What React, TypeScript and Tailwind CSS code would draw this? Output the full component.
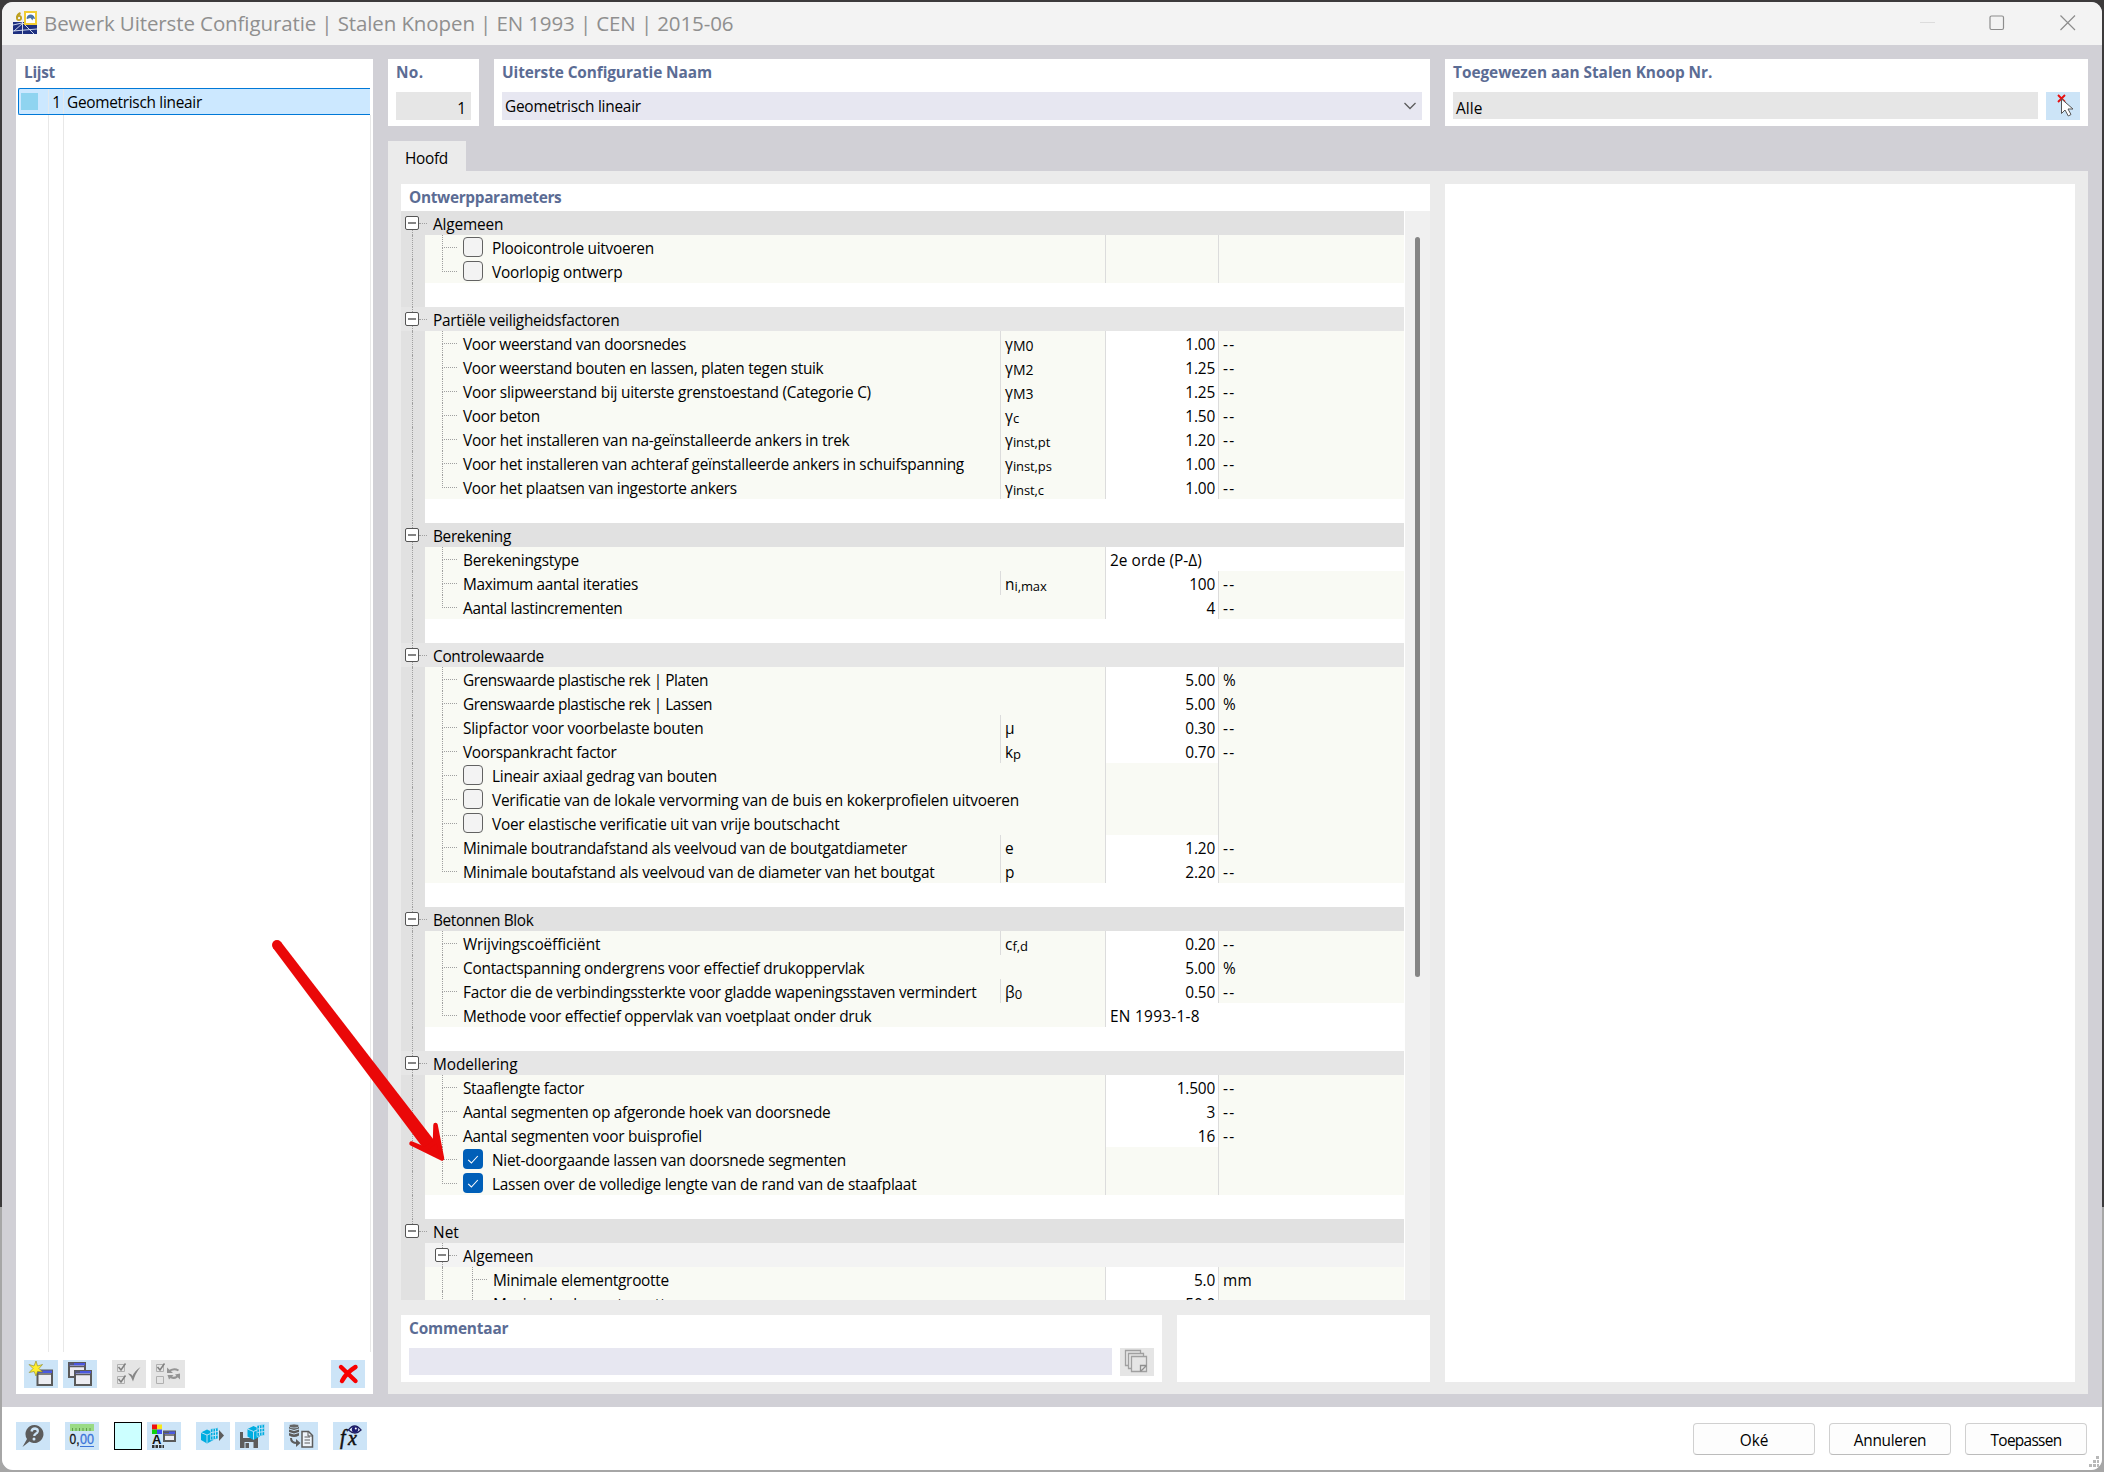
import React, { useLayoutEffect, useRef } from "react";

/* Text run whose tracking is computed so that it fills the given width. */
function Fit({ w, children, className = "" }: { w?: number; children: string; className?: string }) {
  const ref = useRef<HTMLSpanElement>(null);
  useLayoutEffect(() => {
    const el = ref.current;
    if (!el || !w) return;
    el.style.letterSpacing = "0px";
    const natural = el.getBoundingClientRect().width;
    el.style.letterSpacing = `${(w + 0.9 - natural) / children.length}px`;
  }, [w, children]);
  return (
    <span ref={ref} className={"whitespace-pre " + className}>
      {children}
    </span>
  );
}

type Item = {
  t: string;
  w: number;
  sym?: [string, string];
  v?: string;
  u?: string;
  text?: string;
  check?: boolean;
};
type Group = { t: string; w: number; dark: boolean; items: Item[] };

const groups: Group[] = [
  {
    t: "Algemeen", w: 69.5, dark: true,
    items: [
      { t: "Plooicontrole uitvoeren", w: 161, check: false },
      { t: "Voorlopig ontwerp", w: 129.5, check: false },
    ],
  },
  {
    t: "Partiële veiligheidsfactoren", w: 185.5, dark: false,
    items: [
      { t: "Voor weerstand van doorsnedes", w: 222, sym: ["γ", "M0"], v: "1.00", u: "--" },
      { t: "Voor weerstand bouten en lassen, platen tegen stuik", w: 359.5, sym: ["γ", "M2"], v: "1.25", u: "--" },
      { t: "Voor slipweerstand bij uiterste grenstoestand (Categorie C)", w: 407, sym: ["γ", "M3"], v: "1.25", u: "--" },
      { t: "Voor beton", w: 76, sym: ["γ", "c"], v: "1.50", u: "--" },
      { t: "Voor het installeren van na-geïnstalleerde ankers in trek", w: 385.5, sym: ["γ", "inst,pt"], v: "1.20", u: "--" },
      { t: "Voor het installeren van achteraf geïnstalleerde ankers in schuifspanning", w: 500, sym: ["γ", "inst,ps"], v: "1.00", u: "--" },
      { t: "Voor het plaatsen van ingestorte ankers", w: 273, sym: ["γ", "inst,c"], v: "1.00", u: "--" },
    ],
  },
  {
    t: "Berekening", w: 77, dark: true,
    items: [
      { t: "Berekeningstype", w: 115, text: "2e orde (P-Δ)" },
      { t: "Maximum aantal iteraties", w: 174, sym: ["n", "i,max"], v: "100", u: "--" },
      { t: "Aantal lastincrementen", w: 158.5, v: "4", u: "--" },
    ],
  },
  {
    t: "Controlewaarde", w: 110, dark: false,
    items: [
      { t: "Grenswaarde plastische rek | Platen", w: 244, v: "5.00", u: "%" },
      { t: "Grenswaarde plastische rek | Lassen", w: 248, v: "5.00", u: "%" },
      { t: "Slipfactor voor voorbelaste bouten", w: 239.5, sym: ["μ", ""], v: "0.30", u: "--" },
      { t: "Voorspankracht factor", w: 152.5, sym: ["k", "p"], v: "0.70", u: "--" },
      { t: "Lineair axiaal gedrag van bouten", w: 224, check: false },
      { t: "Verificatie van de lokale vervorming van de buis en kokerprofielen uitvoeren", w: 526, check: false },
      { t: "Voer elastische verificatie uit van vrije boutschacht", w: 346.5, check: false },
      { t: "Minimale boutrandafstand als veelvoud van de boutgatdiameter", w: 443, sym: ["e", ""], v: "1.20", u: "--" },
      { t: "Minimale boutafstand als veelvoud van de diameter van het boutgat", w: 470.5, sym: ["p", ""], v: "2.20", u: "--" },
    ],
  },
  {
    t: "Betonnen Blok", w: 99.5, dark: true,
    items: [
      { t: "Wrijvingscoëfficiënt", w: 136.5, sym: ["c", "f,d"], v: "0.20", u: "--" },
      { t: "Contactspanning ondergrens voor effectief drukoppervlak", w: 400.5, v: "5.00", u: "%" },
      { t: "Factor die de verbindingssterkte voor gladde wapeningsstaven vermindert", w: 512.5, sym: ["β", "0"], v: "0.50", u: "--" },
      { t: "Methode voor effectief oppervlak van voetplaat onder druk", w: 407.5, text: "EN 1993-1-8" },
    ],
  },
  {
    t: "Modellering", w: 83.5, dark: false,
    items: [
      { t: "Staaflengte factor", w: 120, v: "1.500", u: "--" },
      { t: "Aantal segmenten op afgeronde hoek van doorsnede", w: 366.5, v: "3", u: "--" },
      { t: "Aantal segmenten voor buisprofiel", w: 238, v: "16", u: "--" },
      { t: "Niet-doorgaande lassen van doorsnede segmenten", w: 353, check: true },
      { t: "Lassen over de volledige lengte van de rand van de staafplaat", w: 423.5, check: true },
    ],
  },
];

const netItems: Item[] = [
  { t: "Minimale elementgrootte", w: 175, v: "5.0", u: "mm" },
  { t: "Maximale elementgrootte", w: 180, v: "50.0", u: "mm" },
];

function Toggle({ above, below }: { above: boolean; below: boolean }) {
  return (
    <div className="flex h-6 w-[14px] shrink-0 flex-col">
      <div className={"ml-[7px] h-[5px] " + (above ? "border-l border-dotted border-[#a0a0a0]" : "")} />
      <div className="flex h-[14px] items-center justify-center rounded-[2px] border border-[#555] bg-white">
        <div className="h-[2px] w-2 bg-[#858585]" />
      </div>
      <div className={"ml-[7px] h-[5px] " + (below ? "border-l border-dotted border-[#a0a0a0]" : "")} />
    </div>
  );
}

function Branch({ last }: { last: boolean }) {
  return (
    <div className="h-6 w-[21px] shrink-0">
      <div className="h-[13px] w-[15px] border-b border-l border-dotted border-[#a0a0a0]" />
      {!last && <div className="h-[11px] border-l border-dotted border-[#a0a0a0]" />}
    </div>
  );
}

function Gutter({ line }: { line: boolean }) {
  return (
    <div className="h-6 w-6 shrink-0 bg-[#e1e1e1] pl-[11px]">
      {line && <div className="h-6 border-l border-dotted border-[#a0a0a0]" />}
    </div>
  );
}

function HeaderRow({ t, w, dark, first, last }: { t: string; w: number; dark: boolean; first: boolean; last: boolean }) {
  return (
    <div className={"flex h-6 shrink-0 pl-1 leading-[28px] " + (dark ? "bg-[#e1e1e1]" : "bg-[#e6e6e6]")}>
      <Toggle above={!first} below={!last} />
      <div className="mr-[6px] h-[13px] w-2 border-b border-dotted border-[#a0a0a0]" />
      <Fit w={w}>{t}</Fit>
    </div>
  );
}

function Check({ on }: { on: boolean }) {
  return on ? (
    <div className="mt-[2px] mr-[9px] h-5 w-5 shrink-0 rounded-[4px] bg-[#005fb8]">
      <svg width="20" height="20" viewBox="0 0 20 20" fill="none" stroke="#fff" strokeWidth="1.1">
        <path d="M5.2 10.800l3.200 3.200 6.400-7" />
      </svg>
    </div>
  ) : (
    <div className="mt-[2px] mr-[9px] h-5 w-5 shrink-0 rounded-[4px] border border-[#626262] bg-[#f3f3f3]" />
  );
}

function ItemRow({ item, last, deep }: { item: Item; last: boolean; deep?: boolean }) {
  const editable = item.v !== undefined;
  return (
    <div className="flex h-6 shrink-0 leading-[28px]">
      <Gutter line={!deep} />
      <div className={"flex h-6 shrink-0 bg-[#f9faf4] pl-[17px] " + (item.sym ? "w-[575px]" : "w-[680px]")}>
        {deep && <div className="h-6 w-[30px] shrink-0 border-l border-dotted border-[#a0a0a0]" />}
        <Branch last={last} />
        {item.check !== undefined && <Check on={item.check} />}
        <Fit w={item.w}>{item.t}</Fit>
      </div>
      {item.sym && (
        <div className="h-6 w-[105px] shrink-0 border-l border-[#dcdcdc] bg-[#f9faf4] pl-1">
          <span>{item.sym[0]}</span>
          <span className={"relative top-px " + (item.sym[1].startsWith("M") ? "text-[14px]" : "text-[13px] tracking-[-0.1px]")}>{item.sym[1]}</span>
        </div>
      )}
      {item.text ? (
        <div className="h-6 grow border-l border-[#dcdcdc] bg-white pl-1">
          <Fit w={item.text.length > 11 ? 91 : 89}>{item.text}</Fit>
        </div>
      ) : (
        <>
          <div className={"h-6 w-[113px] shrink-0 border-l border-[#dcdcdc] pr-[3px] text-right tracking-[-0.2px] " + (editable ? "bg-white" : "bg-[#f9faf4]")}>
            {item.v}
          </div>
          <div className="h-6 grow border-l border-[#dcdcdc] bg-[#f9faf4] pl-1 tracking-[0.3px]">
            {item.u === "--" ? <Fit w={11.5}>--</Fit> : item.u}
          </div>
        </>
      )}
    </div>
  );
}

const Title = ({ w, children }: { w: number; children: string }) => (
  <div className="h-[33px] leading-[27px] font-bold text-[#5b6c94]">
    <Fit w={w}>{children}</Fit>
  </div>
);

function IconBox({ children, gray, ml = "" }: { children: React.ReactNode; gray?: boolean; ml?: string }) {
  return (
    <div className={"h-7 w-[34px] shrink-0 " + ml + (gray ? " bg-[#e5e5e5]" : " bg-[#cce4f7]")}>
      <svg width="34" height="28" viewBox="0 0 34 28" fill="none">
        {children}
      </svg>
    </div>
  );
}

const WindowGlyph = ({ x, y, w = 16, h = 16 }: { x: number; y: number; w?: number; h?: number }) => (
  <g>
    <rect x={x} y={y} width={w} height={h} fill="#ececf2" stroke="#5a5a5a" strokeWidth="2" />
    <rect x={x} y={y} width={w} height="2.5" fill="#4a58e0" />
    <path d={`M${x} ${y + 1}h5M${x} ${y + 3.5}h${w}`} stroke="#5a5a5a" strokeWidth="1.4" />
  </g>
);

const Cube = () => (
  <g>
    <path d="M5 10.500l6-3 6.500 3v7.500l-6.500 3.500-6-3.500z" fill="#00ade0" />
    <path d="M5 10.500l6 2.500 6-2.500M11 13v8" stroke="#cce4f7" strokeWidth=".9" />
    <path d="M14.500 7l7.500-1.200v11l-7.500 1.200z" fill="#00ade0" stroke="#cce4f7" strokeWidth=".6" />
    <path d="M17 7v10M19.500 6.500v10M15 10.500l7-1M15 14l7-1" stroke="#cce4f7" strokeWidth=".9" />
  </g>
);

function PushButton({ w, children }: { w: number; children: string }) {
  return (
    <div className="flex h-8 w-[122px] items-center justify-center rounded-[4px] border border-[#d0d0d0] border-b-[#bcbcbc] bg-[#fdfdfd] pt-[4px]">
      <Fit w={w}>{children}</Fit>
    </div>
  );
}

function TitleBar() {
  return (
    <div className="flex h-[43px] shrink-0 items-center bg-[#f3f3f3] pl-[11px]">
      <svg className="mt-[-1px]" width="24" height="24" viewBox="0 0 24 24" fill="none">
        <rect y="11" width="24" height="12" fill="#1d2f80" />
        <path d="M0 20l24-2M9.500 8v15M10 12L1 20M10 12l11 11M0 14l9-2" stroke="#dfe6f4" strokeWidth=".9" />
        <path d="M7.500 2Q4 3.500 4 7" stroke="#bda021" strokeWidth="2" />
        <circle cx="6" cy="7" r="2.100" stroke="#bda021" strokeWidth="1.800" />
        <rect x="12" y="1" width="11" height="12" fill="#fff" stroke="#f1cc32" strokeWidth="2" />
        <path d="M13.500 7.500q.5-4 4.500-4 3.500.5 4 4.500l-2-.5-.5 2-2-2.500-2 .5-1 .5z" fill="#4b74a8" />
      </svg>
      <Fit w={688.5} className="ml-[7px] text-[20.5px] leading-[41px] -mt-[1px] text-[#8f8f8f]">
        Bewerk Uiterste Configuratie | Stalen Knopen | EN 1993 | CEN | 2015-06
      </Fit>
      <svg className="-mt-px mr-[25px] ml-auto" width="158" height="18" viewBox="0 0 158 18" fill="none">
        <path d="M1 8.500h15" stroke="#dcdcdc" />
        <rect x="71" y="2" width="13.500" height="13.500" rx="1.500" stroke="#8d8d8d" strokeWidth="1.200" />
        <path d="M141.500 1.500l14.500 14.500M156 1.500L141.500 16" stroke="#8d8d8d" strokeWidth="1.200" />
      </svg>
    </div>
  );
}

function ListPanel() {
  return (
    <div className="flex w-[357px] shrink-0 flex-col bg-white">
      <div className="h-[29px] pl-2 leading-[27px] font-bold text-[#5b6c94]">
        <Fit w={30}>Lijst</Fit>
      </div>
      <div className="ml-[2px] flex h-[27px] w-[352px] shrink-0 rounded-l-[2px] border border-r-0 border-[#0078d7] bg-[#cce8ff] leading-[27px]">
        <div className="flex w-[30px] shrink-0 border-r border-[#e4e9ed] pt-1 pl-[2px]">
          <div className="h-[17px] w-[17px] bg-[#8fd4f0]" />
        </div>
        <div className="w-[15px] shrink-0 border-r border-[#e4e9ed] pr-[2px] text-right">1</div>
        <div className="pl-[3px]">
          <Fit w={134}>Geometrisch lineair</Fit>
        </div>
      </div>
      <div className="flex h-[1237px] shrink-0">
        <div className="w-[33px] border-r border-[#e8e8e8]" />
        <div className="w-[15px] border-r border-[#e8e8e8]" />
        <div className="w-[307px] border-r border-[#e8e8e8]" />
      </div>
      <div className="mt-2 flex pr-2 pl-2">
        <IconBox>
          <WindowGlyph x={13.5} y={10.5} w={14.5} h={14.5} />
          <path d="M12 1l1.500 5 5-1.500-3.500 4 3.500 3.500-5-.5L12 16l-1.800-4.500-5 1L9 8.500 5 4.500l5 1.500z" fill="#ffee2e" stroke="#8d8420" strokeWidth=".6" />
        </IconBox>
        <IconBox ml="ml-[5px]">
          <WindowGlyph x={6} y={3} w={16} h={14} />
          <WindowGlyph x={12} y={11} w={16} h={14} />
        </IconBox>
        <IconBox gray ml="ml-[15px]">
          <path d="M5.500 4.500h7v7h-7zM5.500 16.500h7v7h-7z" stroke="#b0b0b0" />
          <path d="M6.500 7l2.500 3 4.500-6.500M6.500 19l2.500 3 4.500-6.500" stroke="#808080" strokeWidth="1.500" />
          <path d="M16 13.500q3.500-.5 4.500 2.500 2-5 8-9-5 6-7.500 14.500-1.500-5-5-8z" fill="#878787" />
        </IconBox>
        <IconBox gray ml="ml-[5px]">
          <path d="M5.500 4.500h7v7h-7zM5.500 16.500h7v7h-7z" stroke="#b0b0b0" />
          <path d="M6.500 7l2.500 3 4.500-6.500" stroke="#808080" strokeWidth="1.500" />
          <path d="M17.500 11.500q5-4 10-1M27.500 15q-3 4.500-8 2" stroke="#949494" strokeWidth="2" />
          <path d="M16 7.500v5.500h6zM29 19.500v-6l-5 1z" fill="#949494" />
          <path d="M16.500 15h6l-4.500 4.500z" fill="#949494" />
        </IconBox>
        <IconBox ml="ml-auto">
          <path d="M10 7l14.500 14M24.500 7q-9 5.500-13.500 14" stroke="#f80000" strokeWidth="4.400" strokeLinecap="round" />
        </IconBox>
      </div>
    </div>
  );
}

function TopPanels() {
  return (
    <div className="flex h-[67px] shrink-0">
      <div className="w-[91px] bg-white px-2">
        <Title w={26.5}>No.</Title>
        <div className="h-7 w-[75px] bg-[#e6e6e6] pr-[5px] text-right leading-[33px]">1</div>
      </div>
      <div className="ml-[15px] w-[936px] bg-white px-2">
        <Title w={209}>Uiterste Configuratie Naam</Title>
        <div className="flex h-7 items-center justify-between bg-[#e7e7f1] pr-[5px] pl-[3px] leading-[28px]">
          <Fit w={135} className="pt-[2px]">Geometrisch lineair</Fit>
          <svg width="14" height="10" viewBox="0 0 14 10" fill="none">
            <path d="M1.500 2l5.500 5.500L12.500 2" stroke="#5c5c5c" strokeWidth="1.300" />
          </svg>
        </div>
      </div>
      <div className="ml-[15px] w-[643px] bg-white px-2">
        <Title w={258.5}>Toegewezen aan Stalen Knoop Nr.</Title>
        <div className="flex">
          <div className="mr-2 h-[27px] w-[585px] bg-[#e6e6e6] pl-[3px] leading-[33px]">
            <Fit w={25.5}>Alle</Fit>
          </div>
          <IconBox>
            <path d="M12 3l7 7M19 3l-7 7" stroke="#e81010" strokeWidth="1.900" />
            <path d="M15.500 7v14.500l3.500-3.500 3.300 6 2.700-1.500-3-5.500h5z" fill="#fff" stroke="#555" />
          </IconBox>
        </div>
      </div>
    </div>
  );
}

function ParameterTree() {
  return (
    <div className="h-[1116px] w-[1029px] overflow-hidden bg-white">
      <div className="h-[27px] pl-2 leading-[28px] font-bold text-[#5b6c94]">
        <Fit w={151.5}>Ontwerpparameters</Fit>
      </div>
      <div className="flex h-[1089px] overflow-hidden">
        <div className="mr-px flex w-[1003px] shrink-0 flex-col overflow-hidden">
          {groups.map((g, i) => (
            <React.Fragment key={g.t}>
              <HeaderRow t={g.t} w={g.w} dark={g.dark} first={i === 0} last={false} />
              {g.items.map((it, k) => (
                <ItemRow key={it.t} item={it} last={k === g.items.length - 1} />
              ))}
              <div className="flex h-6 shrink-0">
                <Gutter line />
              </div>
            </React.Fragment>
          ))}
          <HeaderRow t="Net" w={25} dark first={false} last />
          <div className="flex h-6 shrink-0 leading-[28px]">
            <Gutter line={false} />
            <div className="flex grow bg-[#f3f3f3] pl-[10px]">
              <Toggle above below />
              <div className="mr-[6px] h-[13px] w-2 border-b border-dotted border-[#a0a0a0]" />
              <Fit w={69.5}>Algemeen</Fit>
            </div>
          </div>
          {netItems.map((it) => (
            <ItemRow key={it.t} item={it} last={false} deep />
          ))}
        </div>
        <div className="w-[25px] bg-[#f0f0f0] pt-[26px] pl-[10px]">
          <div className="h-[740px] w-[5px] rounded-full bg-[#858585]" />
        </div>
      </div>
    </div>
  );
}

function CommentRow() {
  return (
    <div className="mt-[15px] flex h-[67px]">
      <div className="w-[761px] bg-white px-2">
        <Title w={98.5}>Commentaar</Title>
        <div className="flex">
          <div className="mr-2 h-[27px] w-[703px] bg-[#e7e7f1]" />
          <IconBox gray>
            <path d="M5.500 2.500h15v15h-15z" stroke="#a0a0a0" strokeWidth="1.300" fill="#e5e5e5" />
            <path d="M8.500 5.500h15v15h-15z" stroke="#a0a0a0" strokeWidth="1.300" fill="#e5e5e5" />
            <path d="M11.500 8.500h15v15h-15z" stroke="#a0a0a0" strokeWidth="1.300" fill="#e5e5e5" />
            <path d="M26.500 17.500h-6v6M20.500 23.500l6-6" stroke="#8f8f8f" strokeWidth="1.300" />
          </IconBox>
        </div>
      </div>
      <div className="ml-[15px] w-[253px] bg-white" />
    </div>
  );
}

function Footer() {
  return (
    <div className="flex h-[63px] shrink-0 items-start bg-white pt-[15px] pl-[14px]">
      <IconBox>
        <path d="M18.500 3a9 9 0 1 1-5 16.500L6.500 25l4.500-8A9 9 0 0 1 18.500 3z" fill="#5c5c5c" />
        <path d="M15.500 9.500q.5-3 3.500-3 3 .3 2.800 2.900-.3 1.600-2.300 2.500-1.200.7-1.200 2.200" stroke="#cce4f7" strokeWidth="2.300" />
        <circle cx="18" cy="17" r="1.500" fill="#cce4f7" />
      </IconBox>
      <IconBox ml="ml-[15px]">
        <rect x="5" y="2" width="24" height="7" fill="#9adb85" />
        <path d="M7.500 9V6M11 9V6M14.500 9V6M18 9V6M21.500 9V6M25 9V6" stroke="#5e9c4a" />
        <text x="4.500" y="22" fontSize="15" fontFamily="Liberation Sans" fill="#111" stroke="#111" strokeWidth=".3" textLength="10" lengthAdjust="spacingAndGlyphs">0,</text>
        <text x="15" y="22" fontSize="15" fontFamily="Liberation Sans" fill="#3b74d8" stroke="#3b74d8" strokeWidth=".3" textLength="14" lengthAdjust="spacingAndGlyphs">00</text>
        <path d="M15 24.500h14" stroke="#3b74d8" strokeWidth="1.200" />
      </IconBox>
      <div className="ml-[15px] h-7 w-7 border border-black bg-[#ccffff]" />
      <IconBox ml="ml-[5px]">
        <rect x="5" y="2.500" width="5" height="5" fill="#f01010" />
        <rect x="10" y="2.500" width="5" height="5" fill="#f7e81a" />
        <rect x="5" y="7.500" width="5" height="4.500" fill="#10d010" />
        <rect x="10" y="7.500" width="5" height="4.500" fill="#4050f0" />
        <text x="5" y="22" fontSize="13" fontWeight="bold" fontFamily="Liberation Sans" fill="#111">A</text>
        <path d="M5 24.500h12" stroke="#333" strokeWidth="3" strokeDasharray="2.500 1" />
        <WindowGlyph x={17} y={9.5} w={11} h={9.5} />
      </IconBox>
      <IconBox ml="ml-[15px]">
        <Cube />
        <path d="M23 8l5 5.500-5 5.500z" fill="#5c5c5c" />
      </IconBox>
      <IconBox ml="ml-[5px]">
        <path d="M5 10h16.500l1.500 1.500V26H5z" fill="#5c5c5c" />
        <path d="M8 10h10v6H8zM9.500 20h9v6h-9z" fill="#cce4f7" />
        <path d="M10.500 21h3.500v5h-3.500z" fill="#5c5c5c" />
        <g transform="translate(7.5 -3.5)">
          <Cube />
        </g>
      </IconBox>
      <IconBox ml="ml-[15px]">
        <path d="M5 3.500v10q5 3 10 0v-10z" fill="#5c5c5c" />
        <ellipse cx="10" cy="4" rx="5" ry="2" fill="#666" stroke="#cce4f7" strokeWidth=".7" />
        <path d="M5 7q5 3 10 0M5 10.500q5 3 10 0" stroke="#cce4f7" />
        <path d="M7 16q0 5 6 5" stroke="#5c5c5c" strokeWidth="2" />
        <path d="M12 17l4.500 4-4.500 4z" fill="#5c5c5c" />
        <path d="M18 9.500h6.500l4 4V25H18z" stroke="#5c5c5c" strokeWidth="1.500" fill="#eef4fa" />
        <path d="M20.500 15h5.500M20.500 18h5.500M20.500 21h5.500M24 9.500v4.500h4.500" stroke="#5c5c5c" />
      </IconBox>
      <IconBox ml="ml-[15px]">
        <text x="7" y="21.500" fontSize="20" fontStyle="italic" fontFamily="Liberation Serif" fill="#111" stroke="#111" strokeWidth=".5">f</text>
        <text x="15" y="23" fontSize="20" fontStyle="italic" fontFamily="Liberation Serif" fill="#111" stroke="#111" strokeWidth=".5">x</text>
        <path d="M15.500 8q6-8 12.500 0-6 6-12.500 0z" fill="#e8f2fb" stroke="#1c1c5c" strokeWidth="1.300" />
        <circle cx="22" cy="7.500" r="3.200" fill="#1c1c70" />
        <circle cx="22.800" cy="6.500" r="1" fill="#fff" />
      </IconBox>
      <div className="mt-px ml-auto flex gap-[14px]">
        <PushButton w={27.5}>Oké</PushButton>
        <PushButton w={71.5}>Annuleren</PushButton>
        <PushButton w={70}>Toepassen</PushButton>
      </div>
      <svg className="mr-[3px] ml-[2px] self-end" width="10" height="14" viewBox="0 0 10 14" fill="#b8b8b8">
        <path d="M7 0h3v3H7zM4 4h3v3H4zM8 4h2v3H8zM0 8h3v3H0zM4 8h3v3H4zM8 8h2v3H8z" />
      </svg>
    </div>
  );
}

export default function App() {
  return (
    <div className="relative h-[1472px] w-[2104px] overflow-hidden bg-[linear-gradient(#3c3a3b_0_1207px,#a6a6a6_1207px)] p-[2px] font-['Open_Sans','Noto_Sans',sans-serif] text-[15.4px] text-black">
      <div className="flex h-[1468px] w-[2100px] flex-col overflow-hidden rounded-[11px] bg-[#d1d0d6]">
        <TitleBar />
        <div className="flex h-[1362px] shrink-0 pt-[14px] pb-[13px] pl-[14px]">
          <ListPanel />
          <div className="ml-[15px] flex w-[1700px] flex-col">
            <TopPanels />
            <div className="mt-[15px] h-[30px] w-[78px] shrink-0 bg-[#ebebeb] pl-[17px] leading-[36px]">
              <Fit w={42}>Hoofd</Fit>
            </div>
            <div className="flex h-[1223px] shrink-0 bg-[#ebebeb] pt-[13px] pl-[13px]">
              <div className="w-[1029px] shrink-0">
                <ParameterTree />
                <CommentRow />
              </div>
              <div className="ml-[15px] h-[1198px] w-[630px] bg-white" />
            </div>
          </div>
        </div>
        <Footer />
      </div>
      <svg className="pointer-events-none absolute top-[930px] left-[262px]" width="190" height="240" viewBox="262 930 190 240">
        <circle cx="277" cy="945" r="5" fill="#ea0808" />
        <path d="M281 942L433.500 1139.500L437 1150L428 1152L422 1146.500L273 948z" fill="#ea0808" />
        <path d="M435.500 1125L442 1158.500L411.500 1143.500L425 1149L435 1142z" fill="#ea0808" stroke="#ea0808" strokeWidth="4.500" strokeLinejoin="round" />
      </svg>
    </div>
  );
}
